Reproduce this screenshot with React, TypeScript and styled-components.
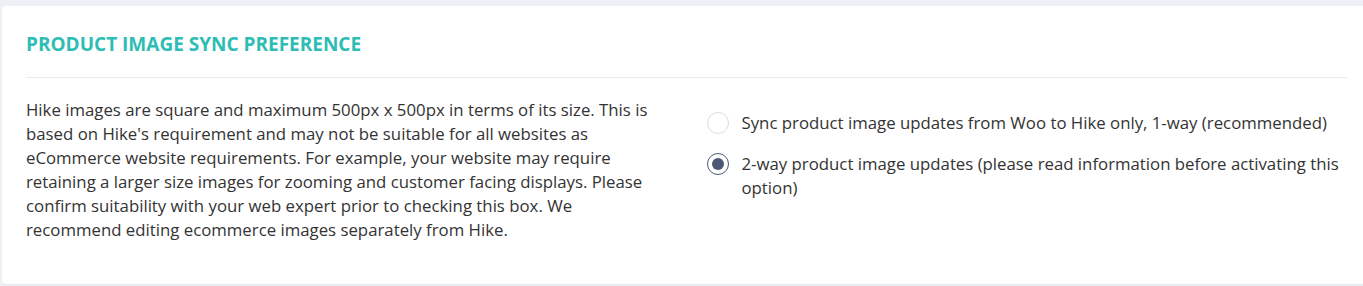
import React, { useState } from 'react';
import styled, { createGlobalStyle } from 'styled-components';

const GlobalStyle = createGlobalStyle`
  html, body {
    margin: 0;
    padding: 0;
    background: #edf0f5;
    font-family: "Open Sans", "Liberation Sans", sans-serif;
    overflow: hidden;
  }
`;

const Page = styled.div`
  padding: 6px 0 2px 2px;
  height: 286px;
  box-sizing: border-box;
`;

const Card = styled.section`
  background: #ffffff;
  border-radius: 4px 0 0 4px;
  height: 278px;
  box-sizing: border-box;
  padding: 26px 16px 0 24px;
  box-shadow: 0 1px 0 #e4e6ea;
`;

const Title = styled.h2`
  margin: 0;
  font-size: 19px;
  line-height: 24px;
  font-weight: 700;
  color: #2dbdb5;
  letter-spacing: 0;
`;

const Divider = styled.hr`
  margin: 21px 0 0;
  border: 0;
  border-top: 1px solid #e9ecef;
`;

const Body = styled.div`
  display: grid;
  grid-template-columns: 1fr 1fr;
  column-gap: 40px;
  padding-top: 20px;
`;

const Description = styled.p`
  margin: 0;
  font-size: 16.8px;
  line-height: 24px;
  color: #333333;
`;

const Options = styled.div`
  display: flex;
  flex-direction: column;
  gap: 17px;
  padding-top: 13px;
`;

const Option = styled.label`
  display: flex;
  align-items: flex-start;
  gap: 13px;
  font-size: 16.8px;
  line-height: 24px;
  color: #333333;
  cursor: pointer;
`;

const Radio = styled.span<{ $checked: boolean }>`
  flex: 0 0 auto;
  width: 22px;
  height: 22px;
  margin-top: 1px;
  box-sizing: border-box;
  border-radius: 50%;
  border: 1.5px solid ${({ $checked }) => ($checked ? '#4b5878' : '#dcdcdc')};
  display: flex;
  align-items: center;
  justify-content: center;

  &::after {
    content: '';
    width: 12px;
    height: 12px;
    border-radius: 50%;
    background: #4b5878;
    display: ${({ $checked }) => ($checked ? 'block' : 'none')};
  }
`;

const options = [
  { id: 'one-way', label: 'Sync product image updates from Woo to Hike only, 1-way (recommended)' },
  { id: 'two-way', label: '2-way product image updates (please read information before activating this option)' },
];

export default function App() {
  const [selected, setSelected] = useState('two-way');

  return (
    <>
      <GlobalStyle />
      <Page>
        <Card>
          <Title>PRODUCT IMAGE SYNC PREFERENCE</Title>
          <Divider />
          <Body>
            <Description>
              Hike images are square and maximum 500px x 500px in terms of its size. This is based on
              Hike's requirement and may not be suitable for all websites as eCommerce website
              requirements. For example, your website may require retaining a larger size images for
              zooming and customer facing displays. Please confirm suitability with your web expert
              prior to checking this box. We recommend editing ecommerce images separately from Hike.
            </Description>
            <Options>
              {options.map((o) => (
                <Option key={o.id} onClick={() => setSelected(o.id)}>
                  <Radio $checked={selected === o.id} />
                  <span>{o.label}</span>
                </Option>
              ))}
            </Options>
          </Body>
        </Card>
      </Page>
    </>
  );
}
